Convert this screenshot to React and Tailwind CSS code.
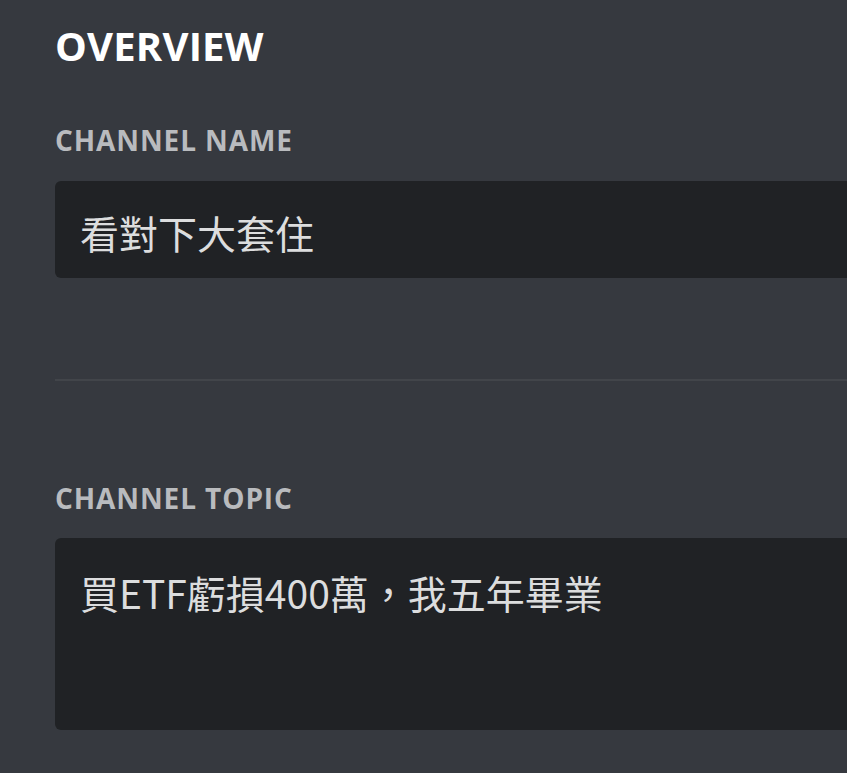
export default function App() {
  const font = { fontFamily: '"Open Sans", "Noto Sans CJK TC", sans-serif' };
  const cjk = { fontFamily: '"Noto Sans CJK TC", sans-serif' };
  return (
    <div
      className="w-[847px] h-[773px] overflow-hidden bg-[#36393f] pl-[55px] pt-[24px]"
      style={font}
    >
      <h1 className="text-[40px] leading-[44px] font-bold text-white tracking-[0.2px]">
        OVERVIEW
      </h1>

      <div className="mt-[56px] text-[28px] leading-[32px] font-bold text-[#b9bbbe] tracking-[0.9px]">
        CHANNEL NAME
      </div>
      <div className="mt-[25px] w-[840px] h-[97px] rounded-l-[6px] bg-[#202225] flex items-center pl-[25px] pt-[6px]">
        <span className="text-[39px] text-[#dcddde] font-normal" style={cjk}>
          看對下大套住
        </span>
      </div>

      <div className="mt-[101px] h-[2px] bg-[#42454a]" />

      <div className="mt-[101px] text-[28px] leading-[32px] font-bold text-[#b9bbbe] tracking-[0.9px]">
        CHANNEL TOPIC
      </div>
      <div className="mt-[24px] w-[840px] h-[192px] rounded-l-[6px] bg-[#202225] pl-[25px] pt-[30px]">
        <span className="text-[39px] leading-[48px] text-[#dcddde]" style={cjk}>
          買ETF虧損400萬，我五年畢業
        </span>
      </div>
    </div>
  );
}
